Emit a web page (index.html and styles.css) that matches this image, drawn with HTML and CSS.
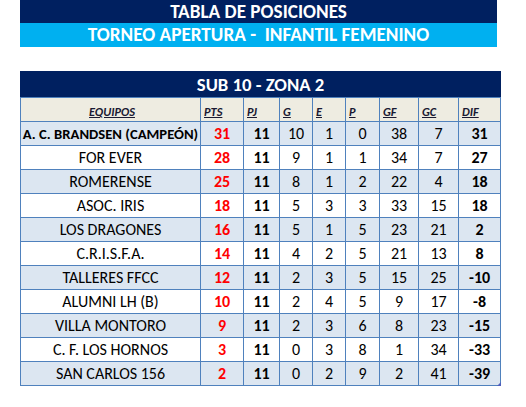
FILE: index.html
```html
<!DOCTYPE html>
<html>
<head>
<meta charset="utf-8">
<link rel="stylesheet" href="styles.css">
</head>
<body>
<div class="page">
  <div class="banner">
    <div class="banner-top">TABLA DE POSICIONES</div>
    <div class="banner-sub">TORNEO APERTURA -&nbsp; INFANTIL FEMENINO</div>
  </div>
  <div class="table-wrap">
  <table class="standings">
    <colgroup>
      <col class="c-team"><col class="c-pts"><col class="c-pj"><col class="c-g"><col class="c-e"><col class="c-p"><col class="c-gf"><col class="c-gc"><col class="c-dif">
    </colgroup>
    <thead>
      <tr class="title-row"><th colspan="9">SUB 10 - ZONA 2</th></tr>
      <tr class="head-row">
        <th class="h-team"><span>EQUIPOS</span></th>
        <th><span>PTS</span></th>
        <th><span>PJ</span></th>
        <th><span>G</span></th>
        <th><span>E</span></th>
        <th><span>P</span></th>
        <th><span>GF</span></th>
        <th><span>GC</span></th>
        <th><span>DIF</span></th>
      </tr>
    </thead>
    <tbody>
      <tr class="odd champ"><td class="team">A. C. BRANDSEN (CAMPEÓN)</td><td class="pts">31</td><td class="pj">11</td><td>10</td><td>1</td><td>0</td><td>38</td><td>7</td><td class="dif">31</td></tr>
      <tr><td class="team">FOR EVER</td><td class="pts">28</td><td class="pj">11</td><td>9</td><td>1</td><td>1</td><td>34</td><td>7</td><td class="dif">27</td></tr>
      <tr class="odd"><td class="team">ROMERENSE</td><td class="pts">25</td><td class="pj">11</td><td>8</td><td>1</td><td>2</td><td>22</td><td>4</td><td class="dif">18</td></tr>
      <tr><td class="team">ASOC. IRIS</td><td class="pts">18</td><td class="pj">11</td><td>5</td><td>3</td><td>3</td><td>33</td><td>15</td><td class="dif">18</td></tr>
      <tr class="odd"><td class="team">LOS DRAGONES</td><td class="pts">16</td><td class="pj">11</td><td>5</td><td>1</td><td>5</td><td>23</td><td>21</td><td class="dif">2</td></tr>
      <tr><td class="team">C.R.I.S.F.A.</td><td class="pts">14</td><td class="pj">11</td><td>4</td><td>2</td><td>5</td><td>21</td><td>13</td><td class="dif">8</td></tr>
      <tr class="odd"><td class="team">TALLERES FFCC</td><td class="pts">12</td><td class="pj">11</td><td>2</td><td>3</td><td>5</td><td>15</td><td>25</td><td class="dif">-10</td></tr>
      <tr><td class="team">ALUMNI LH (B)</td><td class="pts">10</td><td class="pj">11</td><td>2</td><td>4</td><td>5</td><td>9</td><td>17</td><td class="dif">-8</td></tr>
      <tr class="odd"><td class="team">VILLA MONTORO</td><td class="pts">9</td><td class="pj">11</td><td>2</td><td>3</td><td>6</td><td>8</td><td>23</td><td class="dif">-15</td></tr>
      <tr><td class="team">C. F. LOS HORNOS</td><td class="pts">3</td><td class="pj">11</td><td>0</td><td>3</td><td>8</td><td>1</td><td>34</td><td class="dif">-33</td></tr>
      <tr class="odd"><td class="team">SAN CARLOS 156</td><td class="pts">2</td><td class="pj">11</td><td>0</td><td>2</td><td>9</td><td>2</td><td>41</td><td class="dif">-39</td></tr>
    </tbody>
  </table>
  <span class="corner"></span>
  </div>
</div>
</body>
</html>
```
FILE: styles.css
```css
html, body {
  margin: 0;
  padding: 0;
  background: #ffffff;
}
body {
  font-family: "Carlito", "Lato", "Liberation Sans", sans-serif;
  color: #000;
}
.page {
  padding-left: 20px;
}
.banner {
  width: 477px;
  display: flex;
  flex-direction: column;
}
.banner-top {
  background: #002060;
  color: #fff;
  height: 23px;
  line-height: 24px;
  text-align: center;
  font-weight: 700;
  font-size: 19.2px;
  white-space: nowrap;
}
.banner-sub {
  background: #00b0f0;
  color: #fff;
  height: 24px;
  line-height: 24px;
  text-align: center;
  font-weight: 700;
  font-size: 19.2px;
  white-space: nowrap;
}
.table-wrap {
  position: relative;
  width: 481px;
  margin-top: 24px;
}
.standings {
  border-collapse: collapse;
  table-layout: fixed;
  width: 481px;
  font-size: 16px;
}
.c-team { width: 180px; }
.c-pts { width: 43px; }
.c-pj { width: 36px; }
.c-g { width: 33px; }
.c-e { width: 33px; }
.c-p { width: 34px; }
.c-gf { width: 39px; }
.c-gc { width: 40px; }
.c-dif { width: 42px; }

.title-row th {
  background: #002060;
  color: #fff;
  font-size: 18.7px;
  font-weight: 700;
  height: 25px;
  padding: 0;
  text-align: center;
  border: 1px solid #002060;
  border-bottom: 1px solid #4f81bd;
  line-height: 25px;
}
.head-row th {
  background: #eeece1;
  height: 23px;
  padding: 0 0 0 3px;
  text-align: left;
  vertical-align: bottom;
  font-size: 12.3px;
  font-style: italic;
  font-weight: 700;
  color: #1a1a33;
  border: 1px solid #4f81bd;
  line-height: 18px;
}
.head-row th span {
  text-decoration: underline;
}
.head-row th.h-team {
  text-align: center;
}
tbody td {
  height: 23px;
  padding: 0;
  text-align: center;
  border: 1px solid #4f81bd;
  line-height: 22px;
  background: #ffffff;
}
tbody tr.odd td {
  background: #dce6f1;
}
td.team {
  white-space: nowrap;
}
tr.champ td.team {
  font-weight: 700;
  font-size: 14.67px;
}
td.pts {
  color: #ff0000;
  font-weight: 700;
}
td.pj, td.dif {
  font-weight: 700;
}
.corner {
  position: absolute;
  right: 0;
  bottom: 0;
  width: 0;
  height: 0;
  border-left: 4px solid transparent;
  border-bottom: 4px solid #4f5fbd;
}
```
